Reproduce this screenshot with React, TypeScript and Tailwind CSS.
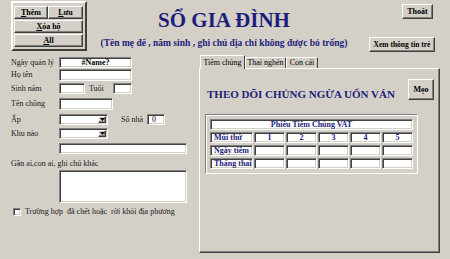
import React from 'react';

const sunken =
  'bg-white border border-t-[#808080] border-l-[#808080] border-b-white border-r-white shadow-[inset_1px_1px_0_#404040,inset_-1px_-1px_0_#d4d0c8]';
const raised =
  'bg-[#d4d0c8] border border-t-white border-l-white border-b-[#404040] border-r-[#404040] shadow-[inset_-1px_-1px_0_#808080]';

const Btn = ({ className, children }: { className: string; children: React.ReactNode }) => (
  <div className={`${raised} ${className} flex items-center justify-center font-bold leading-none text-black whitespace-nowrap`}>
    {children}
  </div>
);

const Select = ({ className }: { className: string }) => (
  <div className={`${sunken} ${className} flex justify-end items-stretch p-[1px]`}>
    <div className={`${raised} w-[8px] flex items-center justify-center`}>
      <svg width="5" height="3" viewBox="0 0 5 3">
        <path d="M0 0h5L2.5 3z" fill="#000" />
      </svg>
    </div>
  </div>
);

const Label = ({ children, className = '' }: { children: React.ReactNode; className?: string }) => (
  <span className={`text-[8px] leading-none text-[#202020] whitespace-nowrap ${className}`}>{children}</span>
);

const Cell = ({ children, className = '' }: { children?: React.ReactNode; className?: string }) => (
  <div className={`${sunken} h-[11px] flex items-center text-[8px] font-bold leading-none text-[#1d1d7c] ${className}`}>
    {children}
  </div>
);

export default function App() {
  return (
    <div className="w-[450px] h-[259px] bg-[#d4d0c8] overflow-hidden font-['Liberation_Serif',serif] flex flex-col">
      {/* header */}
      <div className="flex h-[55px]">
        <div className="ml-[11px] mt-[1px] w-[76px] h-[50px] border-2 border-t-white border-l-white border-b-[#404040] border-r-[#404040] pl-[1px] pt-[3px]">
          <div className="flex">
            <Btn className="w-[34px] h-[13px] text-[8px]">
              <span className="underline">T</span>hêm
            </Btn>
            <Btn className="w-[35px] h-[13px] text-[8px]">
              <span className="underline">L</span>ưu
            </Btn>
          </div>
          <Btn className="mt-[1px] w-[69px] h-[13px] text-[8px]">
            <span className="underline">X</span>óa hộ
          </Btn>
          <Btn className="mt-[1px] w-[69px] h-[13px] text-[8px]">
            <span className="underline">A</span>ll
          </Btn>
        </div>

        <div className="ml-[10px] w-[254px] flex flex-col items-center">
          <div className="mt-[8px] h-[24px] leading-[24px] text-[21px] font-bold text-[#1d1d7c] whitespace-nowrap">
            SỔ GIA ĐÌNH
          </div>
          <div className="mt-[5px] leading-[12px] text-[9.5px] font-bold text-[#1d1d7c] whitespace-nowrap">
            (Tên mẹ để , năm sinh , ghi chú địa chỉ không được bỏ trống)
          </div>
        </div>

        <div className="flex flex-col">
          <Btn className="ml-[51px] mt-[4px] w-[31px] h-[15px] text-[8px]">Thoát</Btn>
          <Btn className="ml-[18px] mt-[18px] w-[66px] h-[15px] text-[7.5px]">Xem thông tin trẻ</Btn>
        </div>
      </div>

      {/* body */}
      <div className="flex items-start">
        <div className="w-[199px] pl-[11px] flex flex-col">
          <div className="mt-[2px] flex items-center h-[11px]">
            <Label className="w-[48px]">Ngày quản lý</Label>
            <div className={`${sunken} w-[73px] h-[11px] flex items-center justify-center text-[8px] font-bold leading-none`}>
              #Name?
            </div>
          </div>
          <div className="mt-[1px] flex items-center h-[12px]">
            <Label className="w-[48px]">Họ tên</Label>
            <div className={`${sunken} w-[73px] h-[12px]`} />
          </div>
          <div className="mt-[2px] flex items-center h-[11px]">
            <Label className="w-[48px]">Sinh năm</Label>
            <div className={`${sunken} w-[26px] h-[11px]`} />
            <Label className="ml-[4px] w-[24px]">Tuổi</Label>
            <div className={`${sunken} w-[19px] h-[11px]`} />
          </div>
          <div className="mt-[4px] flex items-center h-[12px]">
            <Label className="w-[48px]">Tên chồng</Label>
            <div className={`${sunken} w-[54px] h-[12px]`} />
          </div>
          <div className="mt-[4px] flex items-center h-[11px]">
            <Label className="w-[48px]">Ấp</Label>
            <Select className="w-[49px] h-[11px]" />
            <Label className="ml-[13px] w-[26px]">Số nhà</Label>
            <div className={`${sunken} w-[18px] h-[11px] flex items-center pl-[4px] text-[8px] leading-none`}>0</div>
          </div>
          <div className="mt-[3px] flex items-center h-[11px]">
            <Label className="w-[48px]">Khu nào</Label>
            <Select className="w-[49px] h-[11px]" />
          </div>
          <div className={`${sunken} mt-[4px] ml-[48px] w-[128px] h-[11px]`} />
          <Label className="mt-[6px] block leading-[10px]">Gần ai,con ai, ghi chú khác</Label>
          <div className={`${sunken} mt-[2px] ml-[48px] w-[128px] h-[33px]`} />
          <div className="mt-[5px] flex items-center">
            <div className={`${sunken} ml-[2px] w-[8px] h-[8px]`} />
            <Label className="ml-[4px]">Trường hợp&nbsp; đã chết hoặc&nbsp; rời khỏi địa phương</Label>
          </div>
        </div>

        <div className="w-[241px] flex flex-col">
          <div className="flex items-end h-[13px] pl-[1px]">
            <div className="relative z-10 -mb-[1px] w-[45px] h-[14px] bg-[#d4d0c8] border-t border-l border-white border-r border-r-[#404040] flex items-center justify-center text-[8px] leading-none">
              Tiêm chủng
            </div>
            <div className="w-[41px] h-[11px] border-t border-l border-white border-r border-r-[#404040] flex items-center justify-center text-[8px] leading-none">
              Thai nghén
            </div>
            <div className="w-[32px] h-[11px] border-t border-l border-white border-r border-r-[#404040] flex items-center justify-center text-[8px] leading-none">
              Con cái
            </div>
          </div>
          <div className="h-[185px] border border-t-white border-l-white border-b-[#404040] border-r-[#404040] shadow-[inset_-1px_-1px_0_#808080] flex flex-col">
            <div className="mt-[10px] flex items-start h-[21px]">
              <div className="ml-[7px] mt-[8px] leading-[14px] text-[11px] font-bold text-[#1d1d7c] whitespace-nowrap">
                THEO DÕI CHỦNG NGỪA UỐN VÁN
              </div>
              <Btn className="ml-auto mr-[5px] w-[26px] h-[21px] text-[8px]">Mẹo</Btn>
            </div>
            <div className="mt-[14px] ml-[5px] w-[213px] h-[60px] border border-t-[#808080] border-l-[#808080] border-b-white border-r-white shadow-[inset_1px_1px_0_#fff] pt-[4px] pl-[4px]">
              <div className="grid grid-cols-[43px_repeat(5,31px)] gap-x-[1px] gap-y-[2px]">
                <Cell className="col-span-6 justify-center">Phiếu Tiêm Chủng VAT</Cell>
                <Cell className="pl-[3px]">Mũi thứ</Cell>
                <Cell className="justify-center">1</Cell>
                <Cell className="justify-center">2</Cell>
                <Cell className="justify-center">3</Cell>
                <Cell className="justify-center">4</Cell>
                <Cell className="justify-center">5</Cell>
                <Cell className="pl-[3px]">Ngày tiêm</Cell>
                <Cell />
                <Cell />
                <Cell />
                <Cell />
                <Cell />
                <Cell className="pl-[3px]">Tháng thai</Cell>
                <Cell />
                <Cell />
                <Cell />
                <Cell />
                <Cell />
              </div>
            </div>
          </div>
        </div>
      </div>
    </div>
  );
}
